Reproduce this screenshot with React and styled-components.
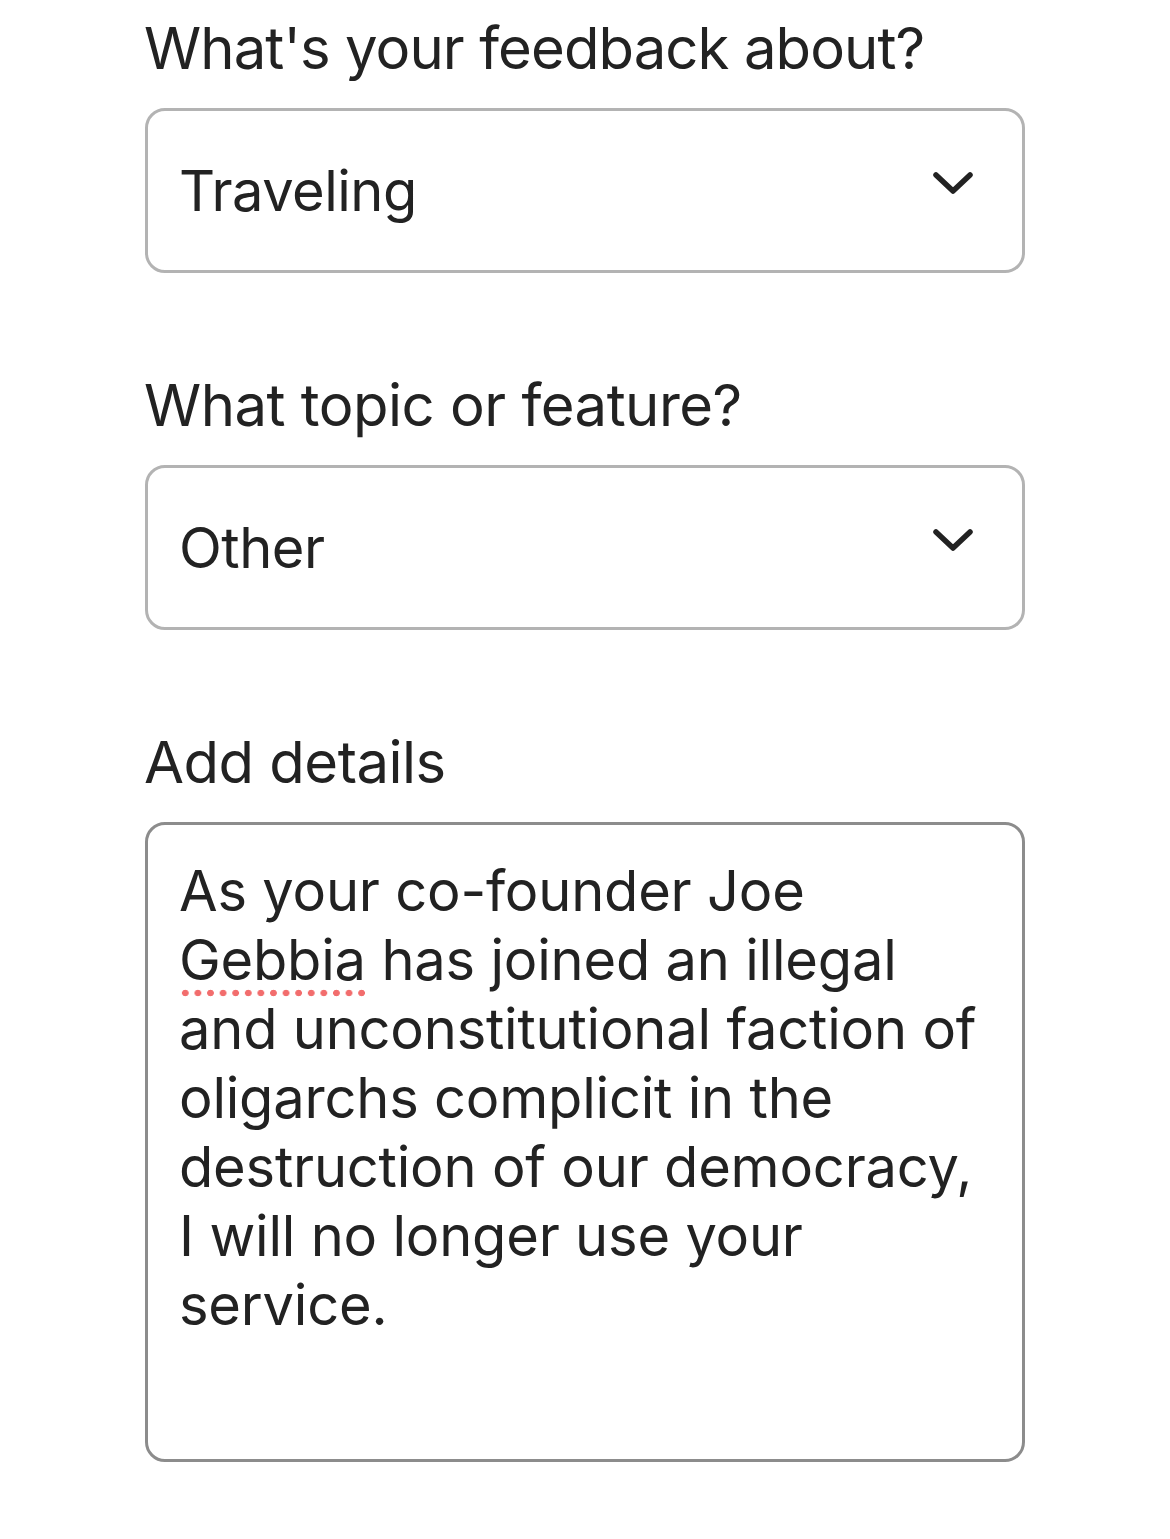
import React from 'react'
import styled, { createGlobalStyle } from 'styled-components'

const Global = createGlobalStyle`
  html, body {
    margin: 0;
    padding: 0;
    background: #fff;
  }
  body {
    font-family: Inter, "Noto Sans", sans-serif;
    color: #222;
  }
`

const Page = styled.div`
  width: 1170px;
  min-height: 1539px;
  padding: 0 145px;
  box-sizing: border-box;
`

const Field = styled.div`
  display: flex;
  flex-direction: column;
`

const Label = styled.div`
  font-size: 58px;
  line-height: 96px;
  height: 108px;
  margin-left: -1px;
  margin-top: ${p => p.$top || 0}px;
  letter-spacing: ${p => p.$tight ? '-0.9px' : '-0.5px'};
`

const Select = styled.div`
  height: 165px;
  border: 3px solid #b3b3b3;
  border-radius: 20px;
  box-sizing: border-box;
  display: flex;
  align-items: center;
  justify-content: space-between;
  padding: 0 48px 0 31px;
  font-size: 56px;
  letter-spacing: -0.5px;
`

const Chevron = styled.svg`
  width: 42px;
  height: 26px;
  margin-top: -14px;
`

const TextArea = styled.div`
  height: 640px;
  border: 3px solid #8c8c8c;
  border-radius: 20px;
  box-sizing: border-box;
  padding: 32px 10px 0 31px;
  font-size: 56px;
  line-height: 69px;
  letter-spacing: -0.2px;
`

const Line = styled.div`
  white-space: nowrap;
`

const Misspelled = styled.span`
  padding-bottom: 3px;
  background-image: radial-gradient(circle, #f26d6d 3px, transparent 3.6px);
  background-size: 12.6px 8px;
  background-repeat: repeat-x;
  background-position: 0 100%;
`

const Arrow = () => (
  <Chevron viewBox="0 0 42 26">
    <path d="M4 4 L21 20 L38 4" fill="none" stroke="#222" strokeWidth="5.5" strokeLinecap="round" strokeLinejoin="round" />
  </Chevron>
)

export default function App() {
  return (
    <Page>
      <Global />
      <Field>
        <Label $tight>What's your feedback about?</Label>
        <Select>Traveling<Arrow /></Select>
      </Field>
      <Field>
        <Label $top={84}>What topic or feature?</Label>
        <Select>Other<Arrow /></Select>
      </Field>
      <Field>
        <Label $top={84}>Add details</Label>
        <TextArea>
          <Line>As your co-founder Joe</Line>
          <Line><Misspelled>Gebbia</Misspelled> has joined an illegal</Line>
          <Line>and unconstitutional faction of</Line>
          <Line>oligarchs complicit in the</Line>
          <Line>destruction of our democracy,</Line>
          <Line>I will no longer use your</Line>
          <Line>service.</Line>
        </TextArea>
      </Field>
    </Page>
  )
}
